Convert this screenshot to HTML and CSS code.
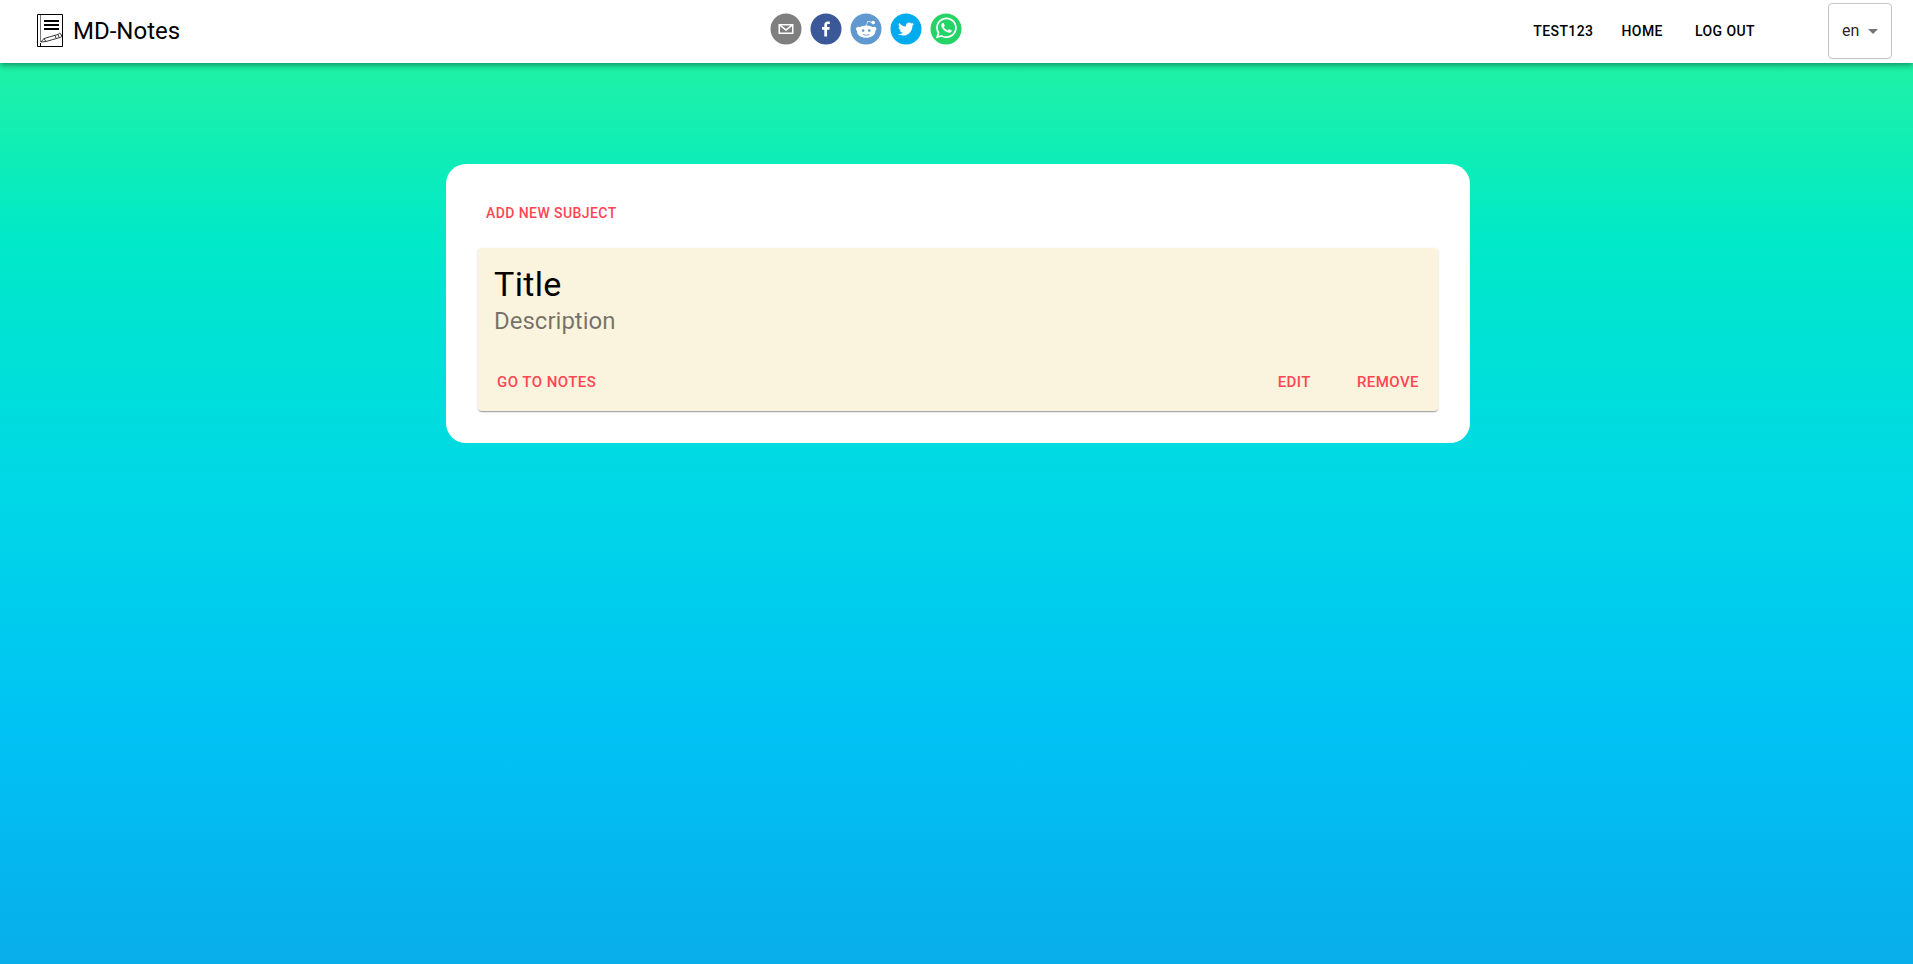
FILE: index.html
```html
<!DOCTYPE html>
<html lang="en">
<head>
<meta charset="utf-8">
<meta name="viewport" content="width=device-width, initial-scale=1">
<title>MD-Notes</title>
<link rel="stylesheet" href="styles.css">
</head>
<body>
<header class="topbar">
  <a class="brand" href="#">
    <svg class="brand-logo" viewBox="0 0 26 33" aria-hidden="true">
      <path d="M.5.5h25v32H.5z" fill="#fff" stroke="#000"/>
      <path d="M3.500 1v27" stroke="#777" fill="none"/>
      <path d="M3.500 29v3" stroke="#000" fill="none"/>
      <path d="M7 7h15M7 11h15M7 15h15" stroke="#000" stroke-width="2" fill="none"/>
      <path d="M4 28l3-3.500 14-4 1.500-1.200 1.500.7.800 2.500-1.800 1-14 4zM7 24.500l2 3M18 21.500l1 2.500M21 20.500l1 2.500" fill="#fff" stroke="#222" stroke-width=".9"/>
    </svg>
    <span>MD-Notes</span>
  </a>
  <div class="share">
    <button class="share-button" aria-label="Share by email"><svg viewBox="0 0 64 64"><circle cx="32" cy="32" r="31" fill="#7f7f7f"/><path fill="#fff" d="M17,22v20h30V22H17z M41.1,25L32,32.1L22.9,25H41.1z M20,39V26.6l12,9.3l12-9.3V39H20z"/></svg></button>
    <button class="share-button" aria-label="Share on Facebook"><svg viewBox="0 0 64 64"><circle cx="32" cy="32" r="31" fill="#3b5998"/><path fill="#fff" d="M34.1,47V33.3h4.6l0.7-5.3h-5.3v-3.4c0-1.5,0.4-2.6,2.6-2.6l2.8,0v-4.8c-0.5-0.1-2.2-0.2-4.1-0.2c-4.1,0-6.9,2.5-6.9,7V28H24v5.3h4.6V47H34.1z"/></svg></button>
    <button class="share-button" aria-label="Share on Reddit"><svg viewBox="0 0 64 64"><circle cx="32" cy="32" r="31" fill="#5f99cf"/><path fill="#fff" d="m 52.8165,31.942362 c 0,-2.4803 -2.0264,-4.4965 -4.5169,-4.4965 -1.2155,0 -2.3171,0.4862 -3.128,1.2682 -3.077,-2.0247 -7.2403,-3.3133 -11.8507,-3.4782 l 2.5211,-7.9373 6.8272,1.5997 -0.0102,0.0986 c 0,2.0281 1.6575,3.6771 3.6958,3.6771 2.0366,0 3.6924,-1.649 3.6924,-3.6771 0,-2.0281 -1.6575,-3.6788 -3.6924,-3.6788 -1.564,0 -2.8968,0.9758 -3.4357,2.3443 l -7.3593,-1.7255 c -0.3213,-0.0782 -0.6477,0.1071 -0.748,0.4233 L 32,25.212062 c -4.8246,0.0578 -9.1953,1.3566 -12.41,3.4425 -0.8058,-0.7446 -1.8751,-1.2104 -3.0583,-1.2104 -2.4905,0 -4.5152,2.0179 -4.5152,4.4982 0,1.649 0.9061,3.0787 2.2389,3.8607 -0.0884,0.4794 -0.1462,0.9639 -0.1462,1.4569 0,6.6487 8.1736,12.0581 18.2223,12.0581 10.0487,0 18.224,-5.4094 18.224,-12.0581 0,-0.4658 -0.0493,-0.9248 -0.1275,-1.377 1.4144,-0.7599 2.3885,-2.2304 2.3885,-3.9406 z m -29.2808,3.0872 c 0,-1.4756 1.207,-2.6775 2.6894,-2.6775 1.4824,0 2.6877,1.2019 2.6877,2.6775 0,1.4756 -1.2053,2.6758 -2.6877,2.6758 -1.4824,0 -2.6894,-1.2002 -2.6894,-2.6758 z m 15.4037,7.9373 c -1.3549,1.3481 -3.4816,2.0043 -6.5008,2.0043 l -0.0221,-0.0051 -0.0221,0.0051 c -3.0209,0 -5.1476,-0.6562 -6.5008,-2.0043 -0.2465,-0.2448 -0.2465,-0.6443 0,-0.8891 0.2465,-0.2465 0.6477,-0.2465 0.8942,0 1.105,1.0999 2.9393,1.6337 5.6066,1.6337 l 0.0221,0.0051 0.0221,-0.0051 c 2.6673,0 4.5016,-0.5355 5.6066,-1.6354 0.2465,-0.2465 0.6477,-0.2448 0.8942,0 0.2465,0.2465 0.2465,0.6443 0,0.8908 z m -0.3213,-5.2615 c -1.4824,0 -2.6877,-1.2002 -2.6877,-2.6758 0,-1.4756 1.2053,-2.6775 2.6877,-2.6775 1.4824,0 2.6877,1.2019 2.6877,2.6775 0,1.4756 -1.2053,2.6758 -2.6877,2.6758 z"/></svg></button>
    <button class="share-button" aria-label="Share on Twitter"><svg viewBox="0 0 64 64"><circle cx="32" cy="32" r="31" fill="#00aced"/><path fill="#fff" d="M48,22.1c-1.2,0.5-2.4,0.9-3.8,1c1.4-0.8,2.4-2.1,2.9-3.6c-1.3,0.8-2.7,1.3-4.2,1.6C41.7,19.8,40,19,38.2,19c-3.6,0-6.6,2.9-6.6,6.6c0,0.5,0.1,1,0.2,1.5c-5.5-0.3-10.3-2.9-13.5-6.9c-0.6,1-0.9,2.1-0.9,3.3c0,2.3,1.2,4.3,2.9,5.5c-1.1,0-2.1-0.3-3-0.8c0,0,0,0.1,0,0.1c0,3.2,2.3,5.8,5.3,6.4c-0.6,0.1-1.1,0.2-1.7,0.2c-0.4,0-0.8,0-1.2-0.1c0.8,2.6,3.3,4.5,6.1,4.6c-2.2,1.8-5.1,2.8-8.2,2.8c-0.5,0-1.1,0-1.6-0.1c2.9,1.9,6.4,2.9,10.1,2.9c12.1,0,18.7-10,18.7-18.7c0-0.3,0-0.6,0-0.8C46,24.5,47.1,23.4,48,22.1z"/></svg></button>
    <button class="share-button" aria-label="Share on WhatsApp"><svg viewBox="0 0 64 64"><circle cx="32" cy="32" r="31" fill="#25D366"/><path fill="#fff" d="m42.32286,33.93287c-0.5178,-0.2589 -3.04726,-1.49644 -3.52105,-1.66732c-0.4712,-0.17346 -0.81554,-0.2589 -1.15987,0.2589c-0.34175,0.51004 -1.33075,1.66474 -1.63108,2.00648c-0.30032,0.33658 -0.60064,0.36247 -1.11327,0.12945c-0.5178,-0.2589 -2.17994,-0.80259 -4.14759,-2.56312c-1.53269,-1.37217 -2.56312,-3.05503 -2.86603,-3.57283c-0.30033,-0.5178 -0.03366,-0.80259 0.22524,-1.06149c0.23301,-0.23301 0.5178,-0.59547 0.7767,-0.90616c0.25372,-0.31068 0.33657,-0.5178 0.51262,-0.85437c0.17088,-0.36246 0.08544,-0.64725 -0.04402,-0.90615c-0.12945,-0.2589 -1.15987,-2.79613 -1.58964,-3.80584c-0.41424,-1.00971 -0.84142,-0.88027 -1.15987,-0.88027c-0.29773,-0.02588 -0.64208,-0.02588 -0.98382,-0.02588c-0.34693,0 -0.90616,0.12945 -1.37736,0.62136c-0.4712,0.5178 -1.80194,1.76053 -1.80194,4.27186c0,2.51134 1.84596,4.945 2.10227,5.30747c0.2589,0.33657 3.63497,5.51458 8.80262,7.74113c1.23237,0.5178 2.1903,0.82848 2.94111,1.08738c1.23237,0.38836 2.35599,0.33657 3.24402,0.20712c0.99159,-0.15534 3.04985,-1.24272 3.47963,-2.45956c0.44013,-1.21683 0.44013,-2.22654 0.31068,-2.45955c-0.12945,-0.23301 -0.46601,-0.36247 -0.98382,-0.59548m-9.40068,12.84407l-0.02589,0c-3.05503,0 -6.08417,-0.82849 -8.72495,-2.38189l-0.62136,-0.37023l-6.47252,1.68286l1.73463,-6.29129l-0.41424,-0.64725c-1.70875,-2.71846 -2.6149,-5.85116 -2.6149,-9.07706c0,-9.39809 7.68934,-17.06155 17.15993,-17.06155c4.58253,0 8.88029,1.78642 12.11655,5.02268c3.23625,3.21036 5.02267,7.50812 5.02267,12.06476c-0.0078,9.3981 -7.69712,17.06155 -17.14699,17.06155m14.58906,-31.58846c-3.93529,-3.80584 -9.1133,-5.95471 -14.62789,-5.95471c-11.36055,0 -20.60848,9.2065 -20.61625,20.52564c0,3.61684 0.94757,7.14565 2.75211,10.26282l-2.92557,10.63564l10.93337,-2.85309c3.0136,1.63108 6.4052,2.4958 9.85634,2.49839l0.01037,0c11.36054,0 20.60847,-9.2065 20.61624,-20.5283c0,-5.48093 -2.14111,-10.64081 -6.03239,-14.51915"/></svg></button>
  </div>
  <div class="topbar-end">
    <nav class="menu">
      <a class="button menu-link" href="#">Test123</a>
      <a class="button menu-link" href="#">Home</a>
      <button class="button menu-link menu-logout">Log out</button>
    </nav>
    <div class="language">
      <select class="language-select" aria-label="Language">
        <option>en</option>
      </select>
      <svg class="language-arrow" viewBox="0 0 24 24" aria-hidden="true"><path d="M7 10l5 5 5-5z"/></svg>
    </div>
  </div>
</header>
<main class="page">
  <section class="panel">
    <button class="button">Add new subject</button>
    <article class="subject">
      <div class="subject-text">
        <h1 class="subject-title">Title</h1>
        <p class="subject-description">Description</p>
      </div>
      <div class="subject-actions">
        <button class="button button-large">Go to notes</button>
        <div class="subject-edit">
          <button class="button button-large">Edit</button>
          <button class="button button-large">Remove</button>
        </div>
      </div>
    </article>
  </section>
</main>
</body>
</html>
```
FILE: styles.css
```css
* {
  box-sizing: border-box;
}

body {
  margin: 0;
  min-height: 100vh;
  font-family: Roboto, "Liberation Sans", sans-serif;
  background: linear-gradient(to bottom, #2af598, #00e9c8, #00d8e6, #00c3f4, #08aeea) no-repeat;
}

.topbar {
  display: flex;
  align-items: center;
  justify-content: space-between;
  min-height: 63px;
  padding: 0 21px 2px 37px;
  background: #fff;
  box-shadow: 0 2px 4px -1px rgba(0, 0, 0, .2), 0 4px 5px rgba(0, 0, 0, .14), 0 1px 10px rgba(0, 0, 0, .12);
}

.brand {
  display: flex;
  align-items: center;
  gap: 10px;
  padding-right: 26px;
  color: #000;
  font-size: 24px;
  line-height: 32px;
  text-decoration: none;
}

.brand-logo {
  width: 26px;
  height: 33px;
}

.share {
  display: flex;
  gap: 8px;
  padding-bottom: 3px;
}

.share-button {
  display: block;
  padding: 0;
  border: 0;
  background: none;
  cursor: pointer;
}

.share-button svg {
  display: block;
  width: 32px;
  height: 32px;
}

.topbar-end {
  display: flex;
  align-items: center;
  gap: 65px;
}

.menu {
  display: flex;
  align-items: center;
  gap: 12px;
}

.button {
  padding: 6px 8px;
  border: 0;
  background: none;
  color: #ff4654;
  font-family: inherit;
  font-size: 14px;
  font-weight: 500;
  line-height: 24px;
  letter-spacing: .03em;
  text-decoration: none;
  text-transform: uppercase;
  cursor: pointer;
}

.button-large {
  padding: 8px 11px;
  font-size: 15px;
  line-height: 26px;
}

.menu-link {
  color: #000;
}

.menu-logout {
  margin-left: 4px;
}

.language {
  display: grid;
  align-items: center;
}

.language-select,
.language-arrow {
  grid-area: 1 / 1;
}

.language-select {
  width: 64px;
  height: 56px;
  padding: 0 32px 0 13px;
  border: 1px solid #c4c4c4;
  border-radius: 4px;
  background: none;
  color: rgba(0, 0, 0, .87);
  font-family: inherit;
  font-size: 16px;
  appearance: none;
}

.language-arrow {
  justify-self: end;
  width: 24px;
  height: 24px;
  margin-right: 7px;
  fill: #757575;
  pointer-events: none;
}

.page {
  padding: 101px 16px 32px 19px;
}

.panel {
  max-width: 1024px;
  margin: 0 auto;
  padding: 31px 32px 32px;
  border-radius: 20px;
  background: #fff;
}

.subject {
  margin-top: 17px;
  border-radius: 4px;
  background: #faf3de;
  box-shadow: 0 2px 1px -1px rgba(0, 0, 0, .2), 0 1px 1px rgba(0, 0, 0, .14), 0 1px 3px rgba(0, 0, 0, .12);
}

.subject-text {
  padding: 16px;
}

.subject-title,
.subject-description {
  margin: 0;
  font-weight: 400;
}

.subject-title {
  font-size: 34px;
  line-height: 41px;
  letter-spacing: .01em;
}

.subject-description {
  color: rgba(0, 0, 0, .54);
  font-size: 24px;
  line-height: 32px;
}

.subject-actions {
  display: flex;
  justify-content: space-between;
  padding: 8px;
}

.subject-edit {
  display: flex;
  gap: 24px;
}
```
